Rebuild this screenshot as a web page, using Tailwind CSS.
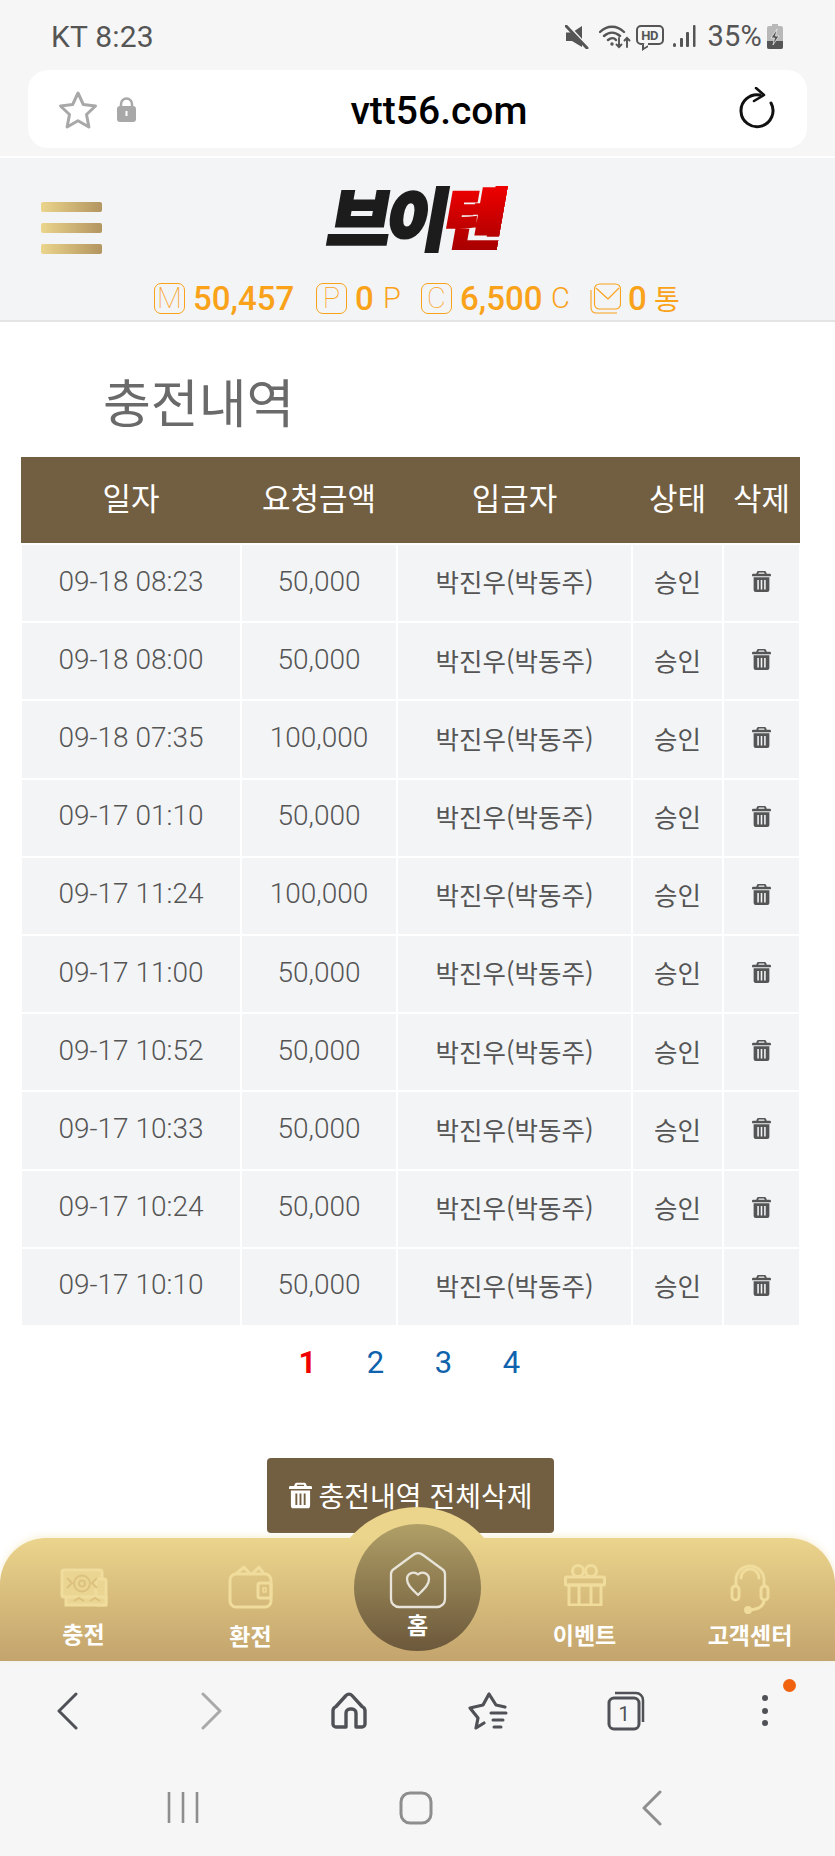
<!DOCTYPE html>
<html lang="ko">
<head>
    <meta charset="UTF-8">
    <meta name="viewport" content="width=device-width, initial-scale=1.0">
    <title>충전내역</title>
    <script src="https://cdn.jsdelivr.net/npm/@tailwindcss/browser@4"></script>
</head>
<body class="bg-white">
<div class="flex flex-col w-[835px] h-[1856px] overflow-hidden bg-white font-['Roboto','Noto_Sans_CJK_KR',sans-serif]">

    <!-- status bar + address bar -->
    <div class="h-[156px] bg-[#f6f6f6] shrink-0">
        <div class="h-[70px] pt-[3px] flex items-center pl-[51px] pr-[52px] text-[#555]">
            <span class="text-[30px] tracking-[0.2px]">KT 8:23</span>
            <div class="ml-auto flex items-center">
                <svg class="w-[24px] h-[24px]" viewBox="0 0 24 24" fill="#555">
                    <path d="M1 7.500h6L17 1v21L7 16H1z"/><path d="M3 0l20 22" stroke="#f6f6f6" stroke-width="2"/><path d="M1 1l21 22" stroke="#555" stroke-width="3" stroke-linecap="round"/>
                </svg>
                <svg class="w-[32px] h-[24px] ml-[10px]" viewBox="0 0 32 24" fill="none" stroke="#555" stroke-width="2.400" stroke-linecap="round">
                    <path d="M1 7c7-7 17-7 24 0M5 11c5-4.500 11-4.500 16 0M9 15c3-2.500 6-2.500 8 0"/><circle cx="13" cy="19" r="1.700" fill="#555" stroke="none"/>
                    <path d="M20 13v9M17.500 19.500l2.500 2.700 2.500-2.700M28 22v-9M25.500 15.500l2.500-2.700 2.500 2.700" stroke-width="1.900"/>
                </svg>
                <div class="relative ml-[5px] mb-[3px] w-[28px] h-[20px] border-2 border-[#555] rounded-[5px] flex items-center justify-center text-[13px] font-bold leading-none tracking-[-0.5px]">HD
                    <span class="absolute left-[4px] bottom-[-6px] w-[6px] h-[6px] bg-[#f6f6f6] border-l-2 border-b-2 border-[#555] -skew-y-[30deg]"></span>
                </div>
                <svg class="w-[23px] h-[23px] ml-[9px]" viewBox="0 0 23 23" fill="#555">
                    <rect x="0" y="18" width="3" height="4" rx="1.500"/><rect x="7" y="13" width="3" height="9" rx="1"/><rect x="13" y="7" width="3" height="15" rx="1"/><rect x="20" y="0" width="2.500" height="22" rx="1"/>
                </svg>
                <span class="ml-[12px] text-[29px] leading-none tracking-[0.2px]">35%</span>
                <svg class="w-[16px] h-[25px] ml-[5px]" viewBox="0 0 16 25">
                    <path d="M5 0h6v2h3a2 2 0 0 1 2 2v19a2 2 0 0 1-2 2H2a2 2 0 0 1-2-2V4a2 2 0 0 1 2-2h3z" fill="#b8b8b8"/>
                    <path d="M0 17h16v6a2 2 0 0 1-2 2H2a2 2 0 0 1-2-2z" fill="#555"/>
                    <path d="M10 5l-6 9h3.500l-1.500 7 6-9H8.500z" fill="#555" stroke="#f6f6f6" stroke-width=".7"/>
                </svg>
            </div>
        </div>
        <div class="mx-[28px] h-[78px] bg-white rounded-[20px] relative flex items-center justify-center">
            <svg class="absolute left-[30px] top-[20px] w-[40px] h-[40px]" viewBox="0 0 40 40" fill="none" stroke="#a8a8a8" stroke-width="3" stroke-linejoin="round">
                <path d="M20 3l5.300 11.500 12.200 1.500-9 8.500 2.400 12.500-10.900-6.200-10.900 6.200 2.400-12.500-9-8.500 12.200-1.500z"/>
            </svg>
            <svg class="absolute left-[89px] top-[27px] w-[19px] h-[25px]" viewBox="0 0 19 25" fill="#a8a8a8">
                <path d="M4 10V7a5.500 5.500 0 0 1 11 0v3" fill="none" stroke="#a8a8a8" stroke-width="2.500"/>
                <rect x="0" y="9" width="19" height="16" rx="3"/><rect x="8.500" y="14" width="2" height="5" fill="#fff"/>
            </svg>
            <span class="pl-[43px] pt-[4px] text-[39px] font-medium text-black leading-none">vtt56.com</span>
            <svg class="absolute right-[32px] top-[17px] w-[36px] h-[42px]" viewBox="0 0 36 42" fill="none" stroke="#111" stroke-width="3" stroke-linecap="round" stroke-linejoin="round">
                <path d="M21 8A16 16 0 1 0 32 16"/><path d="M17 1l8 7-10 6" stroke-width="2.600"/>
            </svg>
        </div>
    </div>
    <div class="h-[2px] bg-white shrink-0"></div>

    <!-- site header -->
    <header class="h-[164px] shrink-0 bg-[#f3f4f6] border-b-2 border-[#e4e4e4] relative">
        <div class="absolute left-[41px] top-[44px] flex flex-col gap-[11px]">
            <span class="block w-[61px] h-[10px] rounded-[2px] bg-gradient-to-r from-[#ebd58c] to-[#b39560]"></span>
            <span class="block w-[61px] h-[10px] rounded-[2px] bg-gradient-to-r from-[#ebd58c] to-[#b39560]"></span>
            <span class="block w-[61px] h-[10px] rounded-[2px] bg-gradient-to-r from-[#ebd58c] to-[#b39560]"></span>
        </div>
        <div class="h-[116px] pr-[2px] flex items-center justify-center font-['Noto_Sans_CJK_KR',sans-serif]">
            <div class="-skew-x-[10deg] text-[68px] font-black leading-none tracking-[-5px] flex">
                <span class="text-[#1c1c1c] [-webkit-text-stroke:3px_#1c1c1c]">브이</span>
                <span class="text-transparent bg-clip-text bg-gradient-to-b from-[#f40000] to-[#a80000] [-webkit-text-stroke:3px_transparent]">텐</span>
            </div>
        </div>
        <div class="absolute left-[154px] top-[125px] flex items-center h-[30px] text-[#f9a21a]">
            <span class="w-[31px] h-[31px] border border-[#f9a21a] rounded-[7px] flex items-center justify-center text-[29px] font-thin leading-none">M</span>
            <span class="ml-[8px] text-[33px] font-medium leading-none w-[123px]">50,457</span>
            <span class="w-[31px] h-[31px] border border-[#f9a21a] rounded-[7px] flex items-center justify-center text-[29px] font-thin leading-none">P</span>
            <span class="ml-[8px] text-[33px] font-medium leading-none w-[28px]">0</span>
            <span class="text-[29px] font-light w-[38px] leading-none">P</span>
            <span class="w-[31px] h-[31px] border border-[#f9a21a] rounded-[7px] flex items-center justify-center text-[29px] font-thin leading-none">C</span>
            <span class="ml-[8px] text-[33px] font-medium leading-none w-[91px]">6,500</span>
            <span class="text-[29px] font-light w-[39px] leading-none">C</span>
            <svg class="w-[31px] h-[31px]" viewBox="0 0 31 31" fill="none" stroke="#f9a21a" stroke-width="1.100" stroke-linejoin="round">
                <rect x="4.500" y="1" width="26" height="25" rx="5"/><path d="M6 5l12 11 11-11"/><path d="M1 7v18a5 5 0 0 0 5 5h21"/>
            </svg>
            <span class="ml-[7px] text-[33px] font-medium leading-none w-[26px]">0</span>
            <span class="text-[28px] leading-none font-['Noto_Sans_CJK_KR',sans-serif]">통</span>
        </div>
    </header>

    <main class="flex-1 min-h-0 pl-[20px] font-['Roboto','Noto_Sans_CJK_KR',sans-serif]">
        <h1 class="pt-[50px] pl-[83px] h-[135px] text-[52px] leading-[58px] font-normal text-[#6a6a6a] font-['Noto_Sans_CJK_KR',sans-serif]">충전내역</h1>

        <table class="w-[779px] table-fixed border-collapse">
            <colgroup>
                <col class="w-[220px]"><col class="w-[156px]"><col class="w-[235px]"><col class="w-[91px]"><col class="w-[77px]">
            </colgroup>
            <thead>
                <tr class="h-[87px] bg-[#725e40] text-white text-[31px] font-['Noto_Sans_CJK_KR',sans-serif]">
                    <th class="font-normal pb-[6px]">일자</th>
                    <th class="font-normal pb-[6px]">요청금액</th>
                    <th class="font-normal pb-[6px]">입금자</th>
                    <th class="font-normal pb-[6px]">상태</th>
                    <th class="font-normal pb-[6px]">삭제</th>
                </tr>
            </thead>
            <tbody id="rows"></tbody>
        </table>

        <div class="w-[779px] mt-[16px] h-[40px] flex justify-center items-center text-[31px] text-[#0f62ad]">
            <a class="w-[68px] text-center font-bold text-[#f00000]">1</a>
            <a class="w-[68px] text-center">2</a>
            <a class="w-[68px] text-center">3</a>
            <a class="w-[68px] text-center">4</a>
        </div>

        <button class="block mt-[75px] ml-[247px] w-[287px] h-[75px] rounded-[4px] bg-[#725e40] text-white">
            <span class="flex items-center justify-center gap-[7px] text-[28px] leading-none font-['Noto_Sans_CJK_KR',sans-serif]">
                <svg class="w-[23px] h-[27px]" viewBox="0 0 18 20" fill="currentColor">
                    <path d="M6 0h6a1.500 1.500 0 0 1 1.300.8L14 2.500h3a1 1 0 0 1 1 1V5H0V3.500a1 1 0 0 1 1-1h3l.7-1.700A1.500 1.500 0 0 1 6 0zm.5 1.500L6 2.500h6l-.5-1z"/>
                    <path fill-rule="evenodd" d="M1.500 6h15v12a2 2 0 0 1-2 2h-11a2 2 0 0 1-2-2zM5 8.500v9h1.500v-9zm3.250 0v9h1.500v-9zm3.250 0v9H13v-9z"/>
                </svg>
                충전내역 전체삭제
            </span>
        </button>
    </main>

    <!-- gold tab bar -->
    <nav class="relative z-10 h-[123px] shrink-0 rounded-t-[46px] bg-gradient-to-b from-[#ebd48c] to-[#c3a46d] shadow-[0_-2px_6px_rgba(235,212,140,0.35)] grid grid-cols-5 text-white text-[23px] font-bold font-['Noto_Sans_CJK_KR',sans-serif]">
        <div class="absolute left-[329px] top-[-31px] w-[176px] h-[32px] overflow-hidden">
            <div class="w-[176px] h-[176px] rounded-full bg-[#ebd48c]"></div>
        </div>

        <a class="flex flex-col items-center">
            <svg class="mt-[30px] w-[48px] h-[40px] blur-[0.6px]" viewBox="0 0 48 40" fill="none" stroke="#f0dc9c" stroke-width="3">
                <rect x="2" y="2" width="40" height="27" rx="2" fill="#ead592"/>
                <rect x="36" y="11" width="10" height="26" rx="2" fill="#ead592"/><rect x="6" y="29" width="40" height="8" fill="#ead592"/>
                <circle cx="22" cy="15.500" r="8" stroke="#dcc27e" stroke-width="2"/><circle cx="22" cy="15.500" r="3" stroke="#dcc27e" stroke-width="2"/>
                <path d="M7 10l5 5-5 5M37 10l-5 5 5 5M14 33l5-3 5 3M30 33l5-3 5 3" stroke="#dcc27e" stroke-width="2"/>
            </svg>
            <span class="mt-[14px] leading-[22px]">충전</span>
        </a>
        <a class="flex flex-col items-center">
            <svg class="mt-[27px] w-[46px] h-[44px] blur-[0.6px]" viewBox="0 0 46 44" fill="none" stroke="#f0dc9c" stroke-width="3" stroke-linejoin="round">
                <rect x="2" y="9" width="41" height="33" rx="6"/>
                <path d="M8 9l8-7 6 7M24 9l7-7 5 7"/>
                <rect x="30" y="18" width="13" height="15" rx="2"/><rect x="35" y="23" width="3" height="4" stroke-width="1.500"/>
            </svg>
            <span class="mt-[15px] leading-[22px]">환전</span>
        </a>

        <!-- raised home button -->
        <a class="relative">
            <div class="absolute left-[20px] top-[-14px] w-[127px] h-[127px] rounded-full bg-gradient-to-b from-[#b0a067] to-[#6c583b] flex flex-col items-center">
                <svg class="mt-[27px] w-[58px] h-[58px]" viewBox="0 0 58 58" fill="none" stroke="#e8e4da" stroke-width="2.300" stroke-linejoin="round">
                    <path d="M24 4a8 8 0 0 1 10 0l19 14a6 6 0 0 1 3 5v25a8 8 0 0 1-8 8H10a8 8 0 0 1-8-8V23a6 6 0 0 1 3-5z"/>
                    <path d="M29 44c-6-6-11-10-11-16a6.500 6.500 0 0 1 11-4.500A6.500 6.500 0 0 1 40 28c0 6-5 10-11 16z"/>
                </svg>
                <span class="mt-[4px] leading-[22px]">홈</span>
            </div>
        </a>

        <a class="flex flex-col items-center">
            <svg class="mt-[26px] w-[42px] h-[42px] blur-[0.6px]" viewBox="0 0 42 42" fill="none" stroke="#f0dc9c" stroke-width="3" stroke-linejoin="round">
                <circle cx="14" cy="7" r="5.500"/><circle cx="27" cy="7" r="5.500"/>
                <rect x="1.500" y="13" width="39" height="8" rx="1"/><rect x="5" y="21" width="32" height="20"/>
                <path d="M15 21v20M27 21v20"/>
            </svg>
            <span class="mt-[17px] leading-[22px]">이벤트</span>
        </a>
        <a class="flex flex-col items-center pr-[3px]">
            <svg class="mt-[26px] w-[40px] h-[50px] blur-[0.6px]" viewBox="0 0 40 50" fill="none" stroke="#f0dc9c" stroke-width="3" stroke-linecap="round">
                <path d="M6 22v-6a14 14 0 0 1 28 0v6"/><path d="M11 14a9 9 0 0 1 18 0"/>
                <rect x="2" y="22" width="7" height="14" rx="3.500"/><rect x="31" y="22" width="7" height="14" rx="3.500"/>
                <path d="M34 36c0 7-6 9-13 10"/><circle cx="18" cy="46" r="2.500" fill="#f0dc9c"/>
            </svg>
            <span class="mt-[9px] leading-[22px]">고객센터</span>
        </a>
    </nav>

    <!-- browser toolbar -->
    <div class="relative h-[195px] shrink-0 bg-[#f6f6f6]">
        <svg class="absolute left-[56px] top-[31px] w-[24px] h-[38px]" viewBox="0 0 24 38" fill="none" stroke="#4f5156" stroke-width="3" stroke-linecap="round" stroke-linejoin="round"><path d="M20 2L3 19l17 17"/></svg>
        <svg class="absolute left-[200px] top-[31px] w-[24px] h-[38px]" viewBox="0 0 24 38" fill="none" stroke="#a9a9a9" stroke-width="3" stroke-linecap="round" stroke-linejoin="round"><path d="M3 2l17 17L3 36"/></svg>
        <svg class="absolute left-[331px] top-[31px] w-[36px] h-[38px]" viewBox="0 0 36 38" fill="none" stroke="#4f5156" stroke-width="3.400" stroke-linejoin="round">
            <path d="M15 3.500a4 4 0 0 1 6 0l10 11a5 5 0 0 1 3 4V32a3 3 0 0 1-3 3h-6V21a4 4 0 0 0-4-4h-2a4 4 0 0 0-4 4v14H5a3 3 0 0 1-3-3V18.500a5 5 0 0 1 3-4z"/>
        </svg>
        <svg class="absolute left-[468px] top-[31px] w-[40px] h-[38px]" viewBox="0 0 40 38" fill="none" stroke="#4f5156" stroke-width="3.200" stroke-linecap="round" stroke-linejoin="round">
            <path d="M37 15l-9-2-7-11-6 11-13 3 8 10-2 10 8-5"/>
            <path d="M23 21h15M25 28h10M26 35h7" stroke-width="3"/>
        </svg>
        <svg class="absolute left-[607px] top-[30px] w-[38px] h-[40px]" viewBox="0 0 38 40" fill="none" stroke="#4f5156" stroke-width="3">
            <rect x="2" y="7" width="30" height="31" rx="5"/><path d="M8 2h21a7 7 0 0 1 7 7v22" stroke-width="2.500"/>
        </svg>
        <span class="absolute left-[609px] top-[41px] w-[30px] text-center text-[20px] leading-[24px] text-[#4f5156]">1</span>
        <div class="absolute left-[762px] top-[34px] flex flex-col gap-[6.500px]">
            <span class="block w-[6px] h-[6px] rounded-full bg-[#4f5156]"></span>
            <span class="block w-[6px] h-[6px] rounded-full bg-[#4f5156]"></span>
            <span class="block w-[6px] h-[6px] rounded-full bg-[#4f5156]"></span>
        </div>
        <span class="absolute left-[783px] top-[18px] w-[13px] h-[13px] rounded-full bg-[#f0620f]"></span>

        <!-- system navigation keys -->
        <svg class="absolute left-[166px] top-[130px] w-[34px] h-[34px]" viewBox="0 0 34 34" stroke="#8e8e8e" stroke-width="2.600"><path d="M3 1v31M17 1v31M31 1v31"/></svg>
        <svg class="absolute left-[398px] top-[130px] w-[36px] h-[34px]" viewBox="0 0 36 34" fill="none" stroke="#8e8e8e" stroke-width="3"><rect x="3" y="2" width="30" height="30" rx="9"/></svg>
        <svg class="absolute left-[641px] top-[129px] w-[22px] h-[36px]" viewBox="0 0 22 36" fill="none" stroke="#8e8e8e" stroke-width="3" stroke-linecap="round" stroke-linejoin="round"><path d="M19 2L3 18l16 16"/></svg>
    </div>
</div>

<script>
    const trashIcon = `<svg class="w-[19px] h-[21px] mx-auto" viewBox="0 0 18 20" fill="#555"><path d="M6 0h6a1.500 1.500 0 0 1 1.300.8L14 2.500h3a1 1 0 0 1 1 1V5H0V3.500a1 1 0 0 1 1-1h3l.7-1.700A1.500 1.500 0 0 1 6 0zm.5 1.500L6 2.500h6l-.5-1z"/><path fill-rule="evenodd" d="M1.500 6h15v12a2 2 0 0 1-2 2h-11a2 2 0 0 1-2-2zM5 8.500v9h1.500v-9zm3.250 0v9h1.500v-9zm3.250 0v9H13v-9z"/></svg>`;

    const history = [
        ['09-18 08:23', '50,000'],
        ['09-18 08:00', '50,000'],
        ['09-18 07:35', '100,000'],
        ['09-17 01:10', '50,000'],
        ['09-17 11:24', '100,000'],
        ['09-17 11:00', '50,000'],
        ['09-17 10:52', '50,000'],
        ['09-17 10:33', '50,000'],
        ['09-17 10:24', '50,000'],
        ['09-17 10:10', '50,000'],
    ];

    const cell = 'border-2 border-white bg-[#f3f4f6] text-center text-[#555] p-0 pb-[3px]';
    document.getElementById('rows').innerHTML = history.map(([date, amount]) => `
        <tr class="h-[78.2px]">
            <td class="${cell} text-[28px] font-light">${date}</td>
            <td class="${cell} text-[28px] font-light">${amount}</td>
            <td class="${cell} text-[25.5px] font-['Noto_Sans_CJK_KR',sans-serif]">박진우(박동주)</td>
            <td class="${cell} text-[25.5px] font-['Noto_Sans_CJK_KR',sans-serif]">승인</td>
            <td class="${cell}">${trashIcon}</td>
        </tr>`).join('');
</script>
</body>
</html>
